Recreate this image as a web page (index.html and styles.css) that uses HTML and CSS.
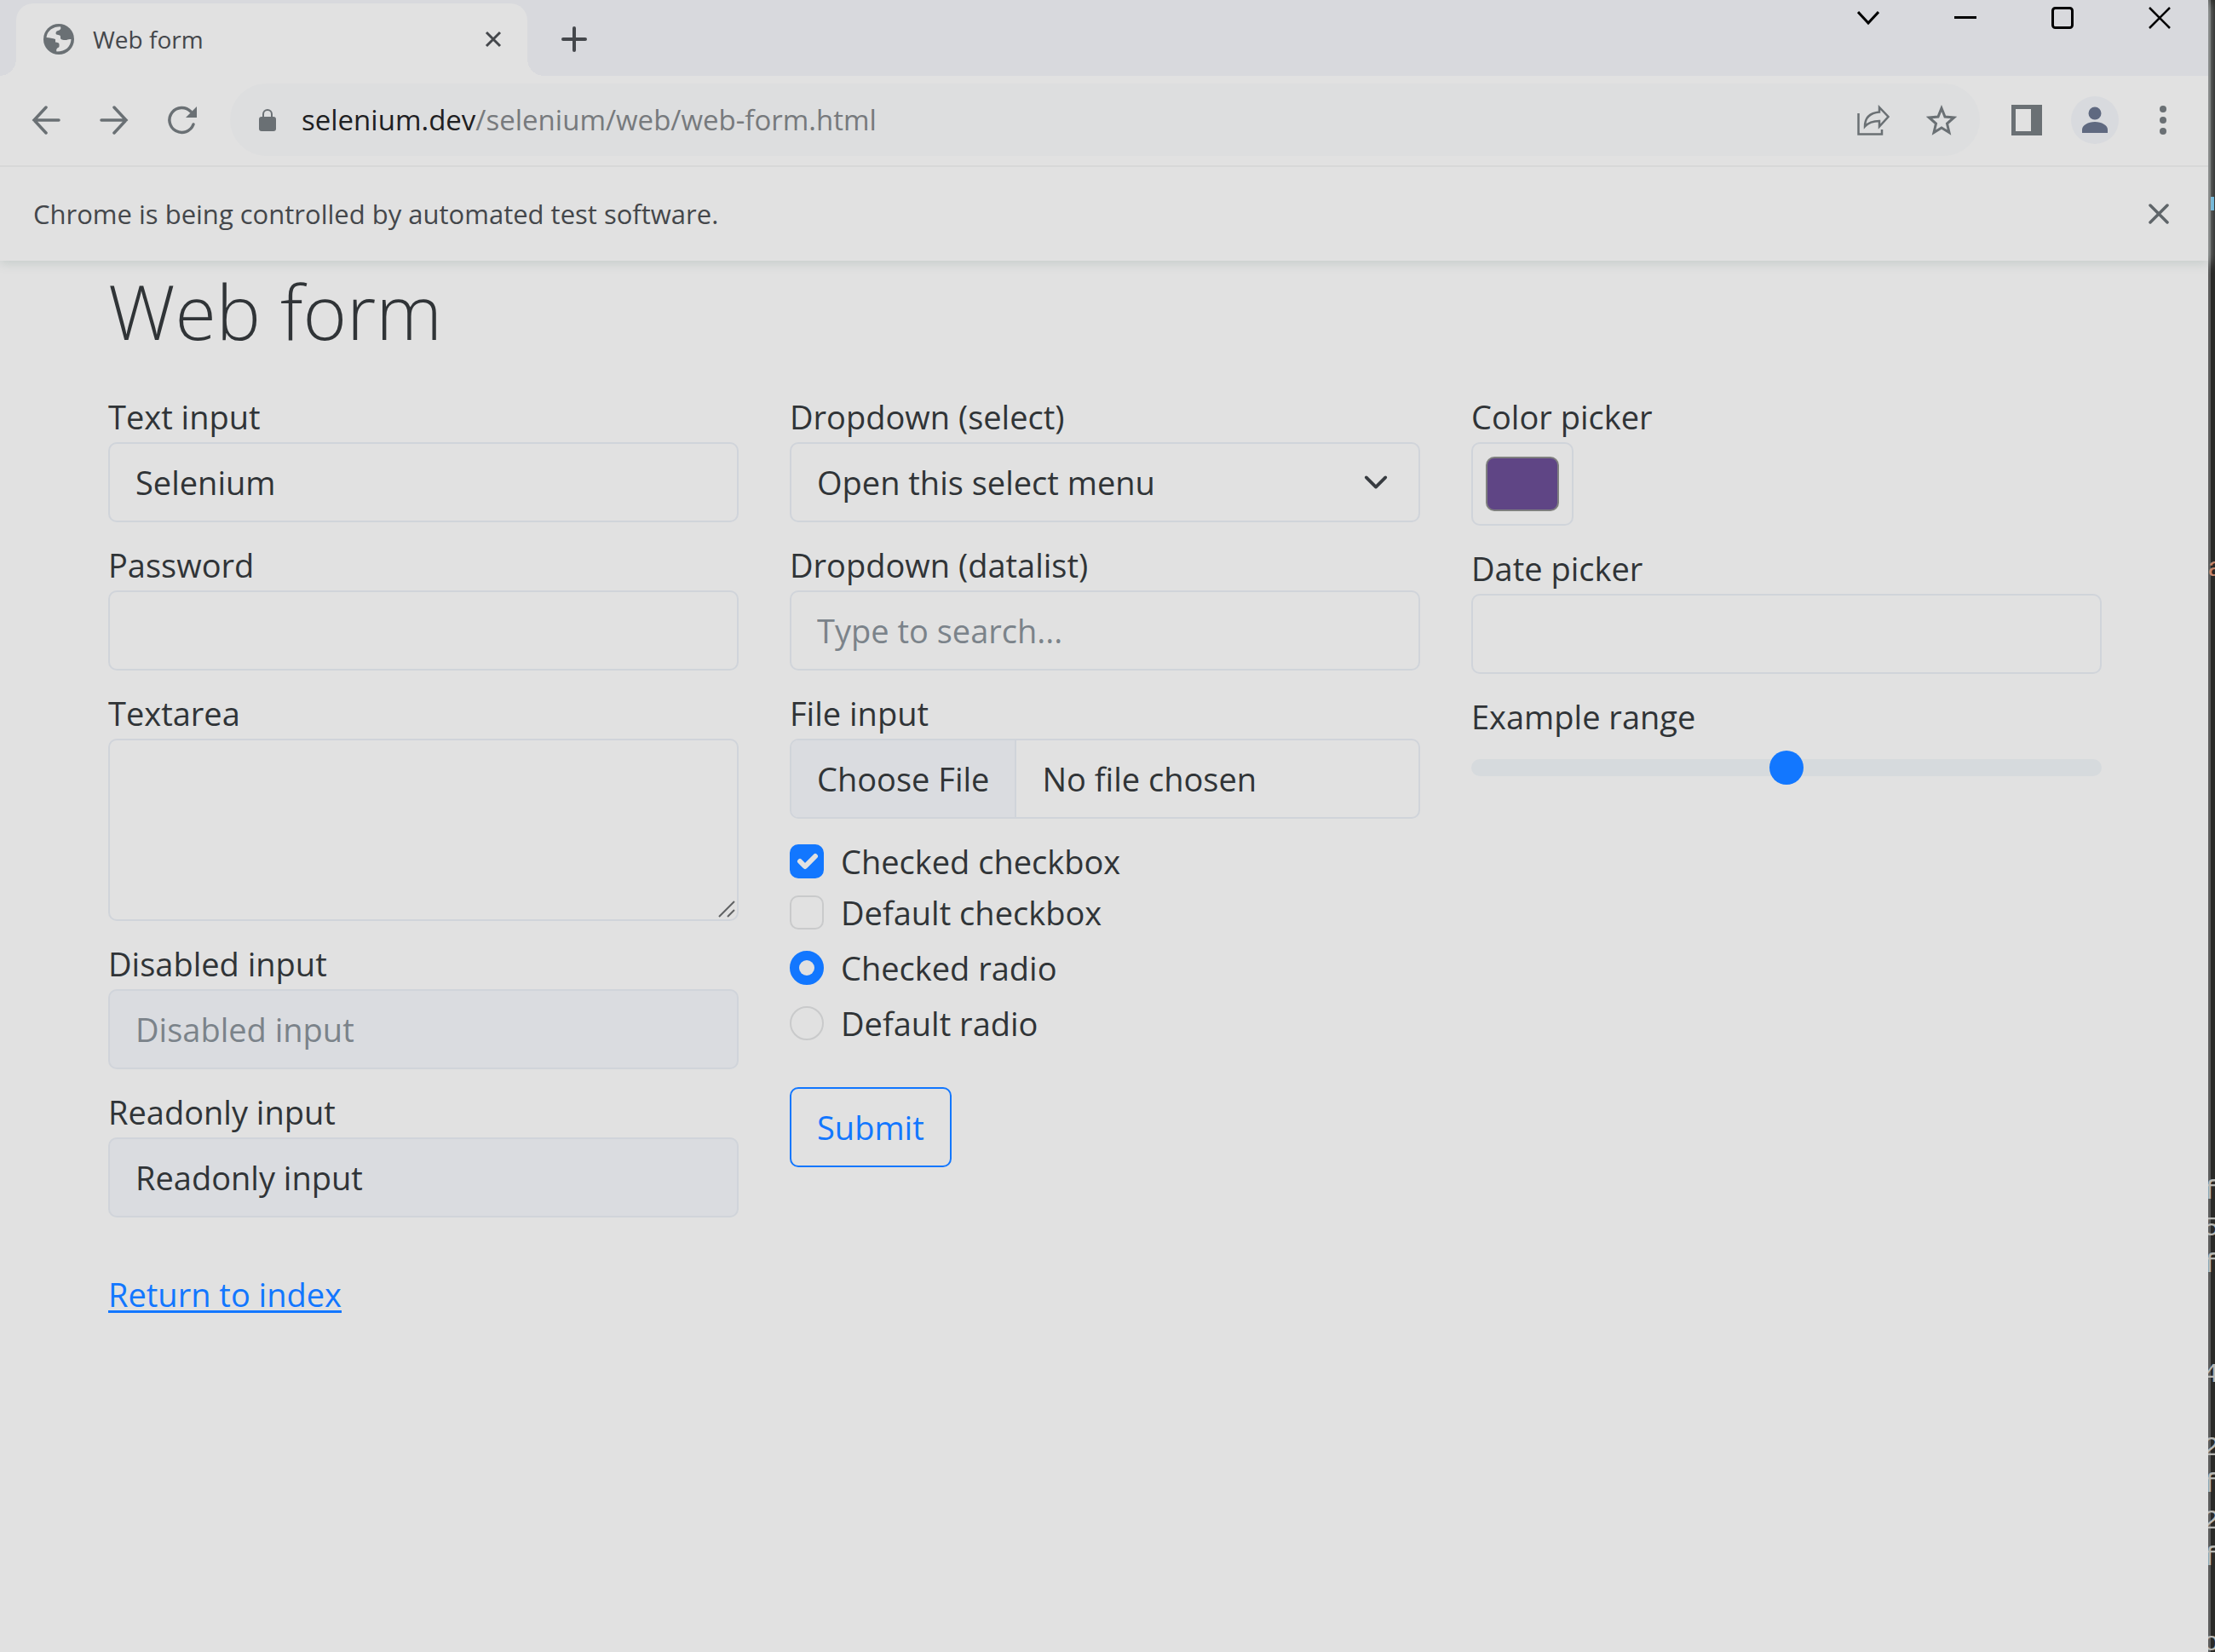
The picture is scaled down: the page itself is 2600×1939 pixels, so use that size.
FILE: index.html
```html
<!DOCTYPE html>
<html lang="en">
<head>
<meta charset="utf-8">
<title>Web form</title>
<meta name="viewport" content="width=device-width, initial-scale=1">
<link rel="stylesheet" href="styles.css">
</head>
<body>
<div class="desktop">
  <div class="window">
    <header class="chrome">
      <div class="tabstrip">
        <div class="tab">
          <svg class="tab-icon" viewBox="0 0 36 36" aria-hidden="true"><circle cx="18" cy="18" r="18" fill="#6a7074"/><path fill="#e1e1e1" d="M3.500 16C4.500 8 11 3.300 20 3.300c1 2 0 3.700-1.500 4.200-2 .5-4 1-4 3.500 0 3 5.500 1 5.500 4v1.500c0 2 3 2.500 6 2.500 2 0 3-1.500 6.500-1C32 27 26 32.500 15.500 32.500c-1-2 0-3.500 1.500-4.500 2-.5 1.500-2.500 1.500-4 0-2-2-2-4.500-2.500V18c-3-1-7-2-10.500-2z"/></svg>
          <span class="tab-title">Web form</span>
          <button class="icon-button tab-close" aria-label="Close tab"><svg width="20" height="20" viewBox="0 0 20 20"><path d="M2 2l16 16M18 2L2 18" fill="none" stroke="#44474b" stroke-width="3"/></svg></button>
        </div>
        <button class="icon-button new-tab" aria-label="New tab"><svg width="30" height="30" viewBox="0 0 30 30"><path d="M15 2v26M2 15h26" fill="none" stroke="#44474b" stroke-width="4" stroke-linecap="round"/></svg></button>
        <div class="window-controls">
          <button class="icon-button control" aria-label="Search tabs"><svg width="26" height="26" viewBox="0 0 26 26"><path d="M1 6l12 13L25 6" fill="none" stroke="#000" stroke-width="3"/></svg></button>
          <button class="icon-button control" aria-label="Minimize"><svg width="26" height="26" viewBox="0 0 26 26"><path d="M0 12.500h26" fill="none" stroke="#000" stroke-width="3"/></svg></button>
          <button class="icon-button control" aria-label="Maximize"><svg width="26" height="26" viewBox="0 0 26 26"><rect x="1.500" y="1.500" width="23" height="23" rx="3" fill="none" stroke="#000" stroke-width="3"/></svg></button>
          <button class="icon-button control" aria-label="Close"><svg width="26" height="26" viewBox="0 0 26 26"><path d="M1 1l24 24M25 1L1 25" fill="none" stroke="#000" stroke-width="2.500"/></svg></button>
        </div>
      </div>
      <div class="toolbar">
        <button class="icon-button tool" aria-label="Back"><svg width="34" height="34" viewBox="0 0 34 34"><path d="M32 17H3M17 2L3 17l14 15" fill="none" stroke="#6a7074" stroke-width="3.500" stroke-linecap="round"/></svg></button>
        <button class="icon-button tool" aria-label="Forward"><svg width="34" height="34" viewBox="0 0 34 34"><path d="M2 17h29M17 2l14 15-14 15" fill="none" stroke="#6a7074" stroke-width="3.500" stroke-linecap="round"/></svg></button>
        <button class="icon-button tool" aria-label="Reload"><svg width="36" height="36" viewBox="0 0 36 36"><path d="M31 23A14.500 14.500 0 1 1 28 8" fill="none" stroke="#6a7074" stroke-width="3.500" stroke-linecap="round"/><path d="M35 2v13H22z" fill="#6a7074"/></svg></button>
        <div class="omnibox">
          <svg width="20" height="26" viewBox="0 0 20 26" aria-hidden="true"><rect x="0" y="9" width="20" height="17" rx="3" fill="#6a7074"/><path d="M5 10V6a5 5 0 0 1 10 0v4" fill="none" stroke="#6a7074" stroke-width="2"/></svg>
          <div class="url"><span class="url-host">selenium.dev</span>/selenium/web/web-form.html</div>
          <button class="icon-button tool" aria-label="Share"><svg width="38" height="36" viewBox="0 0 38 36"><path d="M1.500 10v24.500H29V29M9 25.500C9 15 15 9.500 26 8.500V3l10.500 11L26 25.500V19c-8 0-13 2-17 6.500z" fill="none" stroke="#6a7074" stroke-width="2.500"/></svg></button>
          <button class="icon-button tool" aria-label="Bookmark"><svg width="36" height="36" viewBox="0 0 36 36"><path d="M18 4l4 10 10.500 1-8 7 2.500 10.500-9-5.500-9 5.500L11.500 22l-8-7L14 14z" fill="none" stroke="#6a7074" stroke-width="3"/></svg></button>
        </div>
        <button class="icon-button tool" aria-label="Side panel"><svg width="36" height="36" viewBox="0 0 36 36"><path fill="#6a7074" fill-rule="evenodd" d="M0 0h36v36H0zM5 5v26h18V5z"/></svg></button>
        <button class="icon-button tool" aria-label="Profile"><svg width="56" height="56" viewBox="0 0 56 56"><circle cx="28" cy="28" r="28" fill="#d8dade"/><circle cx="28" cy="20" r="7.500" fill="#5f6980"/><path d="M13 43v-4c0-5 7-9 15-9s15 4 15 9v4z" fill="#5f6980"/></svg></button>
        <button class="icon-button tool" aria-label="Menu"><svg width="8" height="34" viewBox="0 0 8 34"><g fill="#6a7074"><circle cx="4" cy="4" r="4"/><circle cx="4" cy="17" r="4"/><circle cx="4" cy="30" r="4"/></g></svg></button>
      </div>
      <div class="infobar">
        <span>Chrome is being controlled by automated test software.</span>
        <button class="icon-button tool" aria-label="Dismiss"><svg width="24" height="24" viewBox="0 0 24 24"><path d="M2 2l20 20M22 2L2 22" fill="none" stroke="#5f6569" stroke-width="3.500" stroke-linecap="round"/></svg></button>
      </div>
    </header>

    <main class="page">
      <h1 class="title">Web form</h1>
      <form class="columns">
        <div class="column">
          <label class="field">Text input
            <input class="control-box" type="text" value="Selenium"></label>
          <label class="field">Password
            <input class="control-box" type="password"></label>
          <label class="field">Textarea
            <textarea class="control-box area"></textarea></label>
          <label class="field">Disabled input
            <input class="control-box" type="text" placeholder="Disabled input" disabled></label>
          <label class="field">Readonly input
            <input class="control-box" type="text" value="Readonly input" readonly></label>
          <a class="return" href="#index">Return to index</a>
        </div>
        <div class="column">
          <label class="field">Dropdown (select)
            <select class="control-box select">
              <option selected>Open this select menu</option>
              <option>One</option>
              <option>Two</option>
              <option>Three</option>
            </select></label>
          <label class="field">Dropdown (datalist)
            <input class="control-box" list="cities" placeholder="Type to search..."></label>
          <datalist id="cities"><option value="San Francisco"><option value="New York"><option value="Seattle"></datalist>
          <label class="field">File input
            <input class="control-box file" type="file"></label>
          <div class="checks">
            <label class="check"><input class="tick" type="checkbox" checked>Checked checkbox</label>
            <label class="check"><input class="tick" type="checkbox">Default checkbox</label>
          </div>
          <div class="checks">
            <label class="check"><input class="tick round" type="radio" name="choice" checked>Checked radio</label>
          </div>
          <div class="checks">
            <label class="check"><input class="tick round" type="radio" name="choice">Default radio</label>
          </div>
          <button class="submit" type="submit">Submit</button>
        </div>
        <div class="column">
          <label class="field">Color picker
            <input class="control-box color" type="color" value="#5f4585"></label>
          <label class="field">Date picker
            <input class="control-box" type="text"></label>
          <label class="field">Example range
            <input class="range" type="range" min="0" max="10" value="5"></label>
        </div>
      </form>
    </main>
  </div>
  <aside class="backdrop" aria-hidden="true">
    <i class="caret"></i>
    <pre class="code"><span class="string">a</span>
















f
5
f


4

2
f
2
f</pre>
    <pre class="status">o</pre>
  </aside>
</div>
</body>
</html>
```
FILE: styles.css
```css
:root {
  --surface: #e1e1e1;
  --strip: #d8d9dd;
  --text: #303437;
  --muted: #7b838a;
  --line: #d0d4da;
  --filled: #dadce0;
  --blue: #1277ff;
}

* { box-sizing: border-box; }

body {
  margin: 0;
  background: #2a2a28;
  color: var(--text);
  font: 38px/60px "Open Sans", "Noto Sans", sans-serif;
}

.desktop {
  display: grid;
  grid-template-columns: minmax(0, 1fr) 8px;
  min-height: 100vh;
}

.window { background: var(--surface); }

.icon-button {
  display: flex;
  align-items: center;
  justify-content: center;
  flex: none;
  padding: 0;
  border: 0;
  background: none;
}

/* Browser frame */

.chrome {
  position: relative;
  box-shadow: 0 3px 12px #c4cbc9;
  background: var(--surface);
}

.tabstrip {
  display: flex;
  align-items: flex-end;
  height: 89px;
  background: var(--strip);
}

.tab {
  position: relative;
  display: flex;
  align-items: center;
  width: 600px;
  height: 85px;
  margin-left: 19px;
  padding: 0 20px 2px 32px;
  border-radius: 20px 20px 0 0;
  background: var(--surface);
  font-size: 28px;
  color: #44474b;
}

/* Concave feet where the tab meets the toolbar */
.tab::before,
.tab::after {
  content: "";
  position: absolute;
  bottom: 0;
  width: 20px;
  height: 20px;
}

.tab::before {
  right: 100%;
  background: radial-gradient(circle at 0 0, transparent 20px, var(--surface) 20px);
}

.tab::after {
  left: 100%;
  background: radial-gradient(circle at 100% 0, transparent 20px, var(--surface) 20px);
}

.tab-icon { width: 36px; height: 36px; }
.tab-title { flex: 1; margin-left: 22px; }
.tab-close { width: 40px; height: 40px; }
.new-tab { width: 70px; height: 85px; margin-left: 20px; padding-bottom: 2px; }

.window-controls {
  display: flex;
  align-self: flex-start;
  margin-left: auto;
}

.control { width: 114px; height: 41px; }

.toolbar {
  display: flex;
  align-items: center;
  height: 107px;
  padding: 0 13px 2px 14px;
  border-bottom: 2px solid #d7d8d8;
}

.tool { width: 80px; height: 56px; }

.omnibox {
  display: flex;
  align-items: center;
  flex: 1;
  min-width: 0;
  height: 85px;
  margin: 0 15px 0 16px;
  padding: 0 5px 0 34px;
  border-radius: 43px;
  background: #dddedf;
}

.url {
  flex: 1;
  min-width: 0;
  margin-left: 30px;
  overflow: hidden;
  font-size: 33px;
  white-space: nowrap;
  color: #777a7d;
}

.url-host { color: #1e2022; }

.infobar {
  display: flex;
  align-items: center;
  justify-content: space-between;
  height: 110px;
  padding: 0 18px 0 39px;
  font-size: 31px;
  color: #44474b;
}

/* Page */

.page { padding: 1px 125px 40px 127px; }

.title {
  margin: 0 0 36px;
  font-size: 88px;
  font-weight: 300;
  line-height: 116px;
}

.columns {
  display: grid;
  grid-template-columns: repeat(3, minmax(0, 1fr));
  gap: 60px;
}

.field {
  display: block;
  margin-bottom: 20px;
}

.control-box {
  display: block;
  width: 100%;
  height: 94px;
  margin: 0;
  padding: 15px 30px;
  border: 2px solid var(--line);
  border-radius: 10px;
  outline: 0;
  background: transparent;
  color: inherit;
  font: inherit;
  appearance: none;
}

.control-box::placeholder { color: var(--muted); opacity: 1; }
.control-box:disabled,
.control-box:read-only:not(select, [type="file"], [type="color"]) { background: var(--filled); }
.control-box::-webkit-calendar-picker-indicator { display: none !important; }

.area {
  height: 214px;
  resize: none;
  background: url("data:image/svg+xml,%3Csvg xmlns='http://www.w3.org/2000/svg' viewBox='0 0 20 20'%3E%3Cpath d='M1 19 19 1M11 19l8-8' fill='none' stroke='%23606264' stroke-width='2'/%3E%3C/svg%3E") no-repeat right 2px bottom 2px / 20px 20px;
}

.select {
  background: url("data:image/svg+xml,%3Csvg xmlns='http://www.w3.org/2000/svg' viewBox='0 0 16 16'%3E%3Cpath d='m2 5 6 6 6-6' fill='none' stroke='%23373b40' stroke-width='2' stroke-linecap='round' stroke-linejoin='round'/%3E%3C/svg%3E") no-repeat right 35px center / 30px 30px;
}

.file { overflow: hidden; }

.file::file-selector-button {
  margin: -15px 30px -15px -30px;
  padding: 15px 30px;
  border: 0;
  border-right: 2px solid var(--line);
  background: var(--filled);
  color: inherit;
  font: inherit;
}

.color { width: 120px; height: 98px; padding: 15px; }
.color::-webkit-color-swatch-wrapper { padding: 0; }
.color::-webkit-color-swatch { border: 2px solid #7f7f7f; border-radius: 10px; }

.range {
  display: block;
  width: 100%;
  height: 60px;
  margin: 0;
  background: none;
  appearance: none;
}

.range::-webkit-slider-runnable-track {
  height: 20px;
  border-radius: 10px;
  background: #d6dadd;
}

.range::-webkit-slider-thumb {
  width: 40px;
  height: 40px;
  margin-top: -10px;
  border-radius: 50%;
  background: var(--blue);
  appearance: none;
}

.checks { margin-bottom: 5px; }

.check {
  display: flex;
  align-items: center;
  gap: 20px;
}

.tick {
  flex: none;
  width: 40px;
  height: 40px;
  margin: 0;
  border: 2px solid #c9cacb;
  border-radius: 10px;
  background: center / 40px 40px no-repeat;
  appearance: none;
}

.round { border-radius: 50%; }

.tick:checked {
  border-color: var(--blue);
  background-color: var(--blue);
  background-image: url("data:image/svg+xml,%3Csvg xmlns='http://www.w3.org/2000/svg' viewBox='0 0 20 20'%3E%3Cpath d='m6 10 3 3 6-6' fill='none' stroke='%23e1e1e1' stroke-width='3' stroke-linecap='round' stroke-linejoin='round'/%3E%3C/svg%3E");
}

.round:checked {
  background-image: url("data:image/svg+xml,%3Csvg xmlns='http://www.w3.org/2000/svg' viewBox='-20 -20 40 40'%3E%3Ccircle r='9' fill='%23e1e1e1'/%3E%3C/svg%3E");
}

.submit {
  margin-top: 40px;
  padding: 15px 30px;
  border: 2px solid var(--blue);
  border-radius: 10px;
  background: none;
  color: var(--blue);
  font: inherit;
}

.return {
  display: inline-block;
  margin-top: 40px;
  color: var(--blue);
  text-decoration-thickness: 3px;
  text-underline-offset: 4px;
}

/* Sliver of the editor window behind the browser */

.backdrop {
  overflow: hidden;
  background: linear-gradient(90deg, #5b5c5c 3px, #2a2a28 3px);
  color: #b9b9b5;
}

.caret {
  display: block;
  width: 4px;
  height: 16px;
  margin: 231px 0 0 3px;
  background: #62b4dc;
}

.code,
.status {
  margin: 399px 0 0 -6px;
  font: 32px/43px "Liberation Mono", monospace;
}

.code { text-indent: 5px; }
.string { color: #c8876e; }
.status { margin-top: 57px; }
```
